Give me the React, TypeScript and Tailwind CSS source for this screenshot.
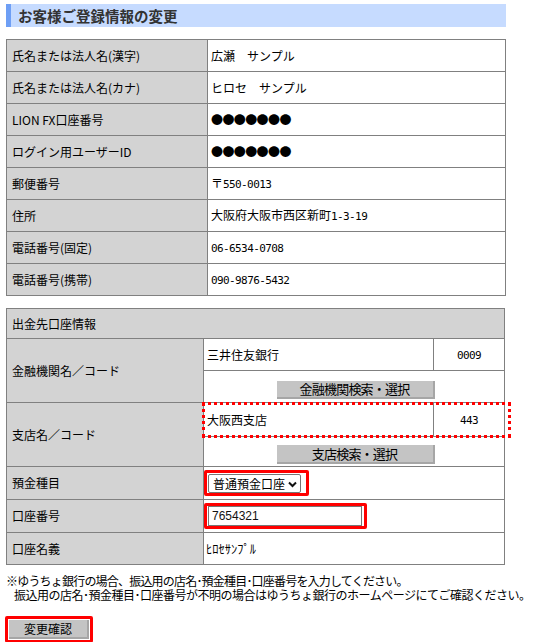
import React from 'react';

// registration info change form (read-only top table + editable withdrawal account)

const mono = "font-['DejaVu_Sans_Mono',monospace] text-[11px] tracking-[-0.6px]";

const infoRows: { label: string; value: React.ReactNode }[] = [
  { label: '氏名または法人名(漢字)', value: '広瀬　サンプル' },
  { label: '氏名または法人名(カナ)', value: 'ヒロセ　サンプル' },
  { label: 'LION FX口座番号', value: <span className="tracking-[-0.6px]">●●●●●●●</span> },
  { label: 'ログイン用ユーザーID', value: <span className="tracking-[-0.6px]">●●●●●●●</span> },
  { label: '郵便番号', value: <>〒<span className={mono}>550-0013</span></> },
  { label: '住所', value: <>大阪府大阪市西区新町<span className={mono}>1-3-19</span></> },
  { label: '電話番号(固定)', value: <span className={mono}>06-6534-0708</span> },
  { label: '電話番号(携帯)', value: <span className={mono}>090-9876-5432</span> },
];

const labelCell = 'border border-[#808080] bg-[#d3d3d3] pl-[5px] align-middle';
const valueCell = 'border border-[#808080] bg-white pl-[3px] align-middle';

function GrayButton({ children, className = '' }: { children: React.ReactNode; className?: string }) {
  return (
    <button
      type="button"
      className={`bg-[#c4c4c4] border-r-2 border-b-2 border-[#a6a6a6] text-[13px] leading-[16px] tracking-[-0.8px] text-black ${className}`}
    >
      {children}
    </button>
  );
}

export default function App() {
  return (
    <div className="w-[533px] min-h-[642px] bg-white font-['Noto_Sans_CJK_JP',sans-serif] text-[12px] leading-[16px] text-black">
      {/* Title */}
      <div className="ml-[6px] pt-1">
        <div className="w-[500px] h-[23px] flex items-center bg-[#c6dbff] border-l-[5px] border-[#6e9ff5] pl-[7px]">
          <h1 className="text-[14.5px] font-bold text-[#333]">お客様ご登録情報の変更</h1>
        </div>
      </div>

      {/* Registered info */}
      <table className="ml-[6px] mt-3 w-[500px] border-collapse">
        <tbody>
          {infoRows.map((row) => (
            <tr key={row.label} className="h-8">
              <td className={`${labelCell} w-[201px]`}>{row.label}</td>
              <td className={valueCell}>{row.value}</td>
            </tr>
          ))}
        </tbody>
      </table>

      {/* Withdrawal account */}
      <table className="ml-[6px] mt-[12px] w-[499px] border-collapse">
        <tbody>
          <tr className="h-[30px]">
            <td colSpan={3} className={labelCell}>出金先口座情報</td>
          </tr>
          <tr className="h-8">
            <td rowSpan={2} className={`${labelCell} w-[197px]`}>金融機関名／コード</td>
            <td className={valueCell}>三井住友銀行</td>
            <td className={`${valueCell} w-[71px] !pl-0 text-center`}>
              <span className={mono}>0009</span>
            </td>
          </tr>
          <tr className="h-8">
            <td colSpan={2} className={`${valueCell} text-center`}>
              <GrayButton className="w-[158px] h-[18px] mt-[6px]">金融機関検索・選択</GrayButton>
            </td>
          </tr>
          <tr className="h-[34px]">
            <td rowSpan={2} className={labelCell}>支店名／コード</td>
            <td className={`${valueCell} relative`}>
              大阪西支店
              <div className="absolute -left-[2px] -top-[1px] w-[309px] h-[36px] border-[3px] border-dotted border-[#ff0000] pointer-events-none" />
            </td>
            <td className={`${valueCell} !pl-0 text-center`}>
              <span className={mono}>443</span>
            </td>
          </tr>
          <tr className="h-[30px]">
            <td colSpan={2} className={`${valueCell} text-center`}>
              <GrayButton className="w-[158px] h-[19px] mt-[6px]">支店検索・選択</GrayButton>
            </td>
          </tr>
          <tr className="h-[33px]">
            <td className={labelCell}>預金種目</td>
            <td colSpan={2} className={`${valueCell} !pl-0`}>
              <div className="inline-flex w-[105px] h-[26px] border-[3px] border-[#ff0000] rounded-[2px] pl-px pt-px">
                <div className="w-[93px] h-[19px] flex items-center justify-between border border-[#767676] rounded-[2px] bg-white pl-[4px] pr-[3px]">
                  <span className="text-[12px] leading-[16px]">普通預金口座</span>
                  <svg width="9" height="7" viewBox="0 0 9 7" className="mt-px">
                    <polyline points="1,1.5 4.5,5 8,1.5" fill="none" stroke="#111" strokeWidth="2" />
                  </svg>
                </div>
              </div>
            </td>
          </tr>
          <tr className="h-[33px]">
            <td className={labelCell}>口座番号</td>
            <td colSpan={2} className={`${valueCell} !pl-0`}>
              <div className="inline-flex w-[163px] h-[26px] border-[3px] border-[#ff0000] rounded-[2px] pl-px">
                <input
                  type="text"
                  defaultValue="7654321"
                  className="w-[154px] h-[20px] border border-[#767676] bg-white px-[3px] font-['Liberation_Sans',sans-serif] text-[12px] text-[#111] outline-none"
                />
              </div>
            </td>
          </tr>
          <tr className="h-[32px]">
            <td className={labelCell}>口座名義</td>
            <td colSpan={2} className={`${valueCell} !pl-[2px] text-[12.5px]`}>ﾋﾛｾｻﾝﾌﾟﾙ</td>
          </tr>
        </tbody>
      </table>

      {/* Note */}
      <div className="ml-[6px] mt-[9px] leading-[14px] whitespace-nowrap">
        <p className="tracking-[-0.8px]">※ゆうちょ銀行の場合、振込用の店名･預金種目･口座番号を入力してください。</p>
        <p className="pl-[8px] tracking-[-0.5px]">振込用の店名･預金種目･口座番号が不明の場合はゆうちょ銀行のホームページにてご確認ください。</p>
      </div>

      {/* Submit */}
      <div className="ml-[5px] mt-[14px] inline-flex border-[3px] border-[#ff0000] rounded-[2px] p-px">
        <GrayButton className="w-[80px] h-[19px] !text-[12px] !tracking-normal">変更確認</GrayButton>
      </div>
    </div>
  );
}
